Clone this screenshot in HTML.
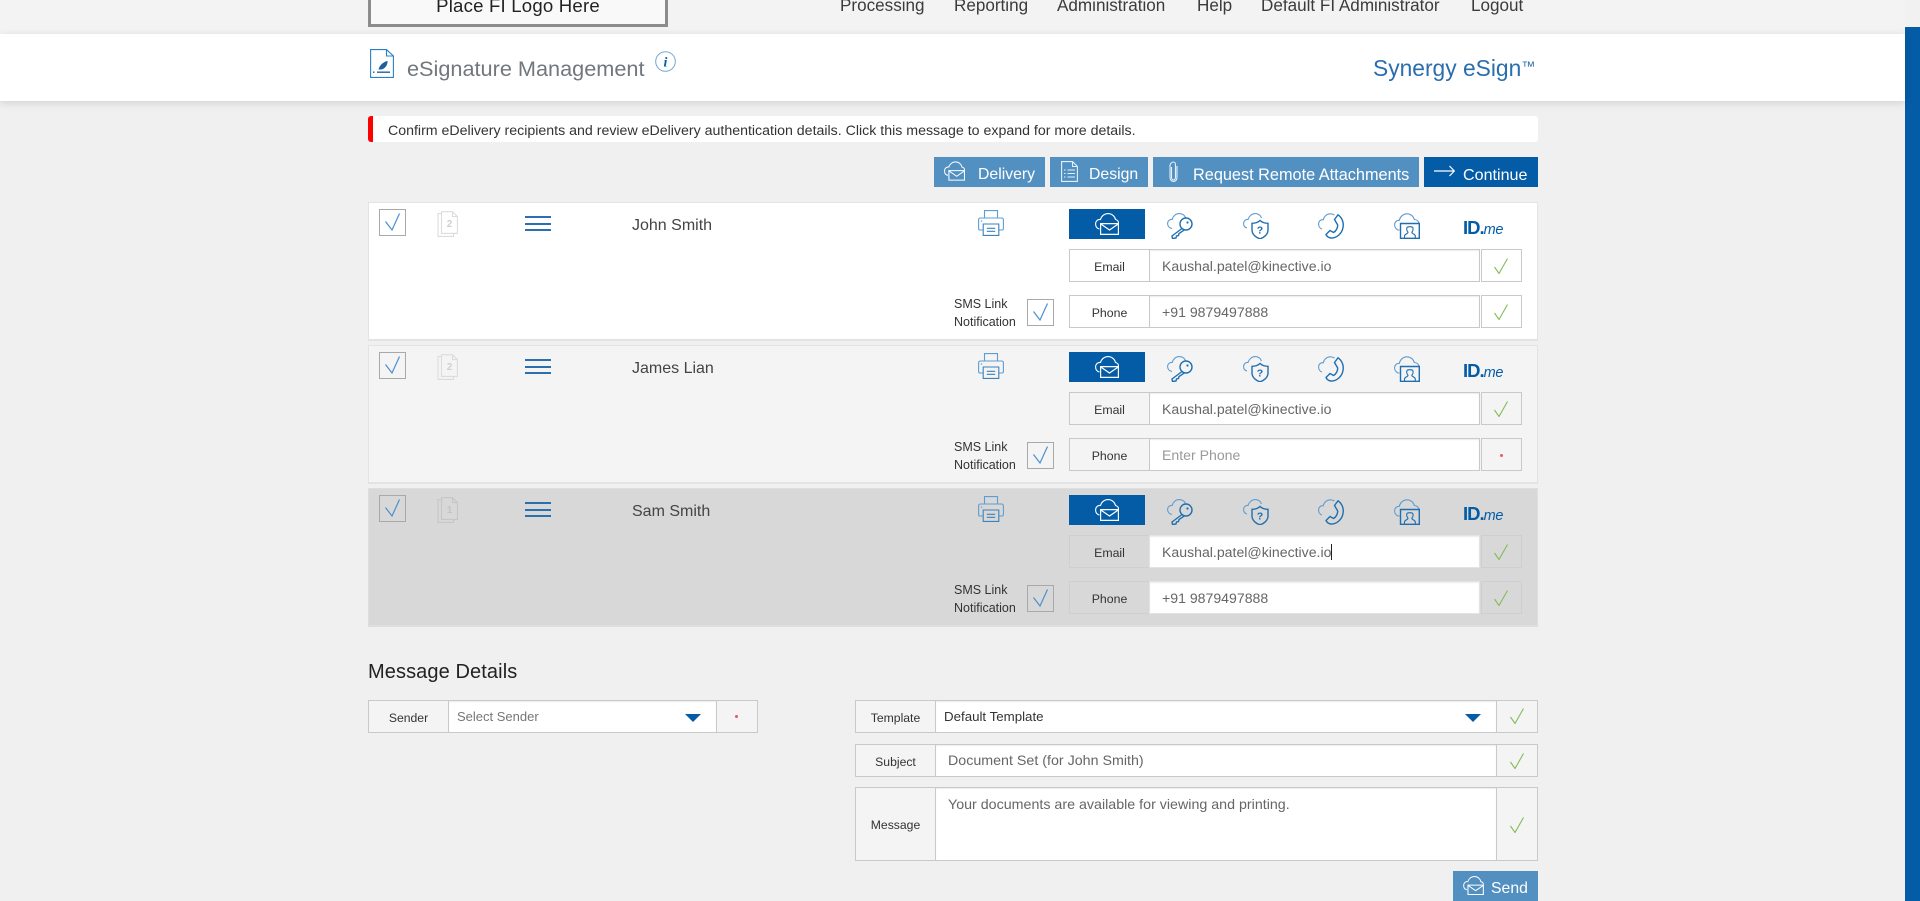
<!DOCTYPE html>
<html lang="en">
<head>
<meta charset="utf-8">
<title>eSignature Management</title>
<style>
*{box-sizing:border-box}
html,body{margin:0;padding:0;width:1920px;height:901px;overflow:hidden;background:#f0f0f0;font-family:"Liberation Sans",Arial,sans-serif;color:#333}
.a,.t,svg.i{position:absolute}
.t{white-space:nowrap;line-height:20px;height:20px}
#top{left:0;top:0;width:1905px;height:34px;background:#f3f3f3}
#logo{left:368px;top:-6px;width:300px;height:33px;background:#f9f9f9;border:3px solid #8c8c8c;text-align:center;font-size:18.6px;line-height:17px;color:#222;letter-spacing:.2px}
.nav{font-size:17.1px;color:#3b3b3b;top:-4px}
#bar{left:0;top:34px;width:1905px;height:67px;background:#fff;box-shadow:0 2px 8px rgba(0,0,0,.13)}
#sb{left:1905px;top:27px;width:15px;height:874px;background:#045ca6}
#sbt{left:1905px;top:0;width:15px;height:27px;background:#f1f1f1}
#msg{left:368px;top:116px;width:1170px;height:26px;background:#fff;border-left:5px solid #f00;border-radius:3px}
.btn{height:30px;top:157px;background:#5390c2}
.bt{color:#fff;font-size:15.8px;top:165px}
.row{left:368px;width:1170px;height:138px;background:#fff;box-shadow:inset 0 0 0 1px #e3e3e3,0 1px 0 #e3e3e3;color:#dcdcdc}
.row.r2{background:#f4f4f4}
.row.r3{background:#d8d8d8;box-shadow:inset 0 0 0 1px #dedede,0 1px 0 #dedede;color:#c6c6c6}
.cb{width:27px;height:27px;border:1px solid #a9a9a9}
.name{left:264px;top:14px;font-size:16px;color:#444}
.blk{left:701px;top:7px;width:76px;height:30px;background:#045ca6}
.h{height:2px;left:157px;width:26px;background:#2a70ae}
.sms{left:586px;font-size:12.5px;color:#333}
.f{height:33px;left:701px;width:453px}
.c{position:absolute;top:0;height:33px;border:1px solid #c9c9c9}
.lab{left:0;width:81px;text-align:center;font-size:12.3px;line-height:35px;color:#333}
.inp{left:80px;width:331px;background:#fff;box-shadow:inset 0 1px 1px rgba(0,0,0,.08);font-size:14.1px;line-height:33px;padding-left:12px;color:#666;white-space:nowrap}
.ok{left:412px;width:41px}
.r3 .c{border-color:#cfcfcf}
.r3 .inp{border-color:#e3e3e3}
.ph{color:#999}
.caret{display:inline-block;width:1px;height:16px;background:#222;vertical-align:-3px}
.dot{position:absolute;width:3px;height:3px;border-radius:50%;background:#e8566a}
.gc{position:absolute;width:14px;height:16px;fill:none;stroke:#86ba5a;stroke-width:1.1}
.m .c{height:33px;background:#f4f4f4}
.m .lab{font-size:12.2px;background:#f4f4f4}
.m .inp{background:#fff;line-height:31px}
.idme{color:#045ca6;font-weight:bold;font-size:18.5px;letter-spacing:-1px;top:16px}
.idme i{font-size:14.5px;font-weight:normal;letter-spacing:-.3px;font-family:"Liberation Sans",sans-serif}
.lt{fill:none;stroke:#5f9dd0;stroke-width:1.1}
.dk{fill:none;stroke:#1f6fb0;stroke-width:1.4}
</style>
</head>
<body>
<svg width="0" height="0" style="position:absolute">
<defs>
<symbol id="mail" viewBox="0 0 24 22"><path d="M4.5 16C2 15.5.6 13.5.6 11 .6 8 3 6 5.5 6.5 6.5 3 9.5.6 13 .6c4 0 7 2.9 7.5 5.9 2 .5 3 2 3 3.5" fill="none" stroke="currentColor" stroke-width="1.1"/><path d="M5.6 10.6H23.4V21.4H5.6ZM5.8 11 14.5 17 23.2 11" fill="none" stroke="currentColor" stroke-width="1.2"/></symbol>
<symbol id="key" viewBox="0 0 26 26"><path class="lt" d="M5 15.5C2.3 15 .6 13 .6 10.5.6 8 2.8 6 5.2 6.5 6 3 9 .6 12 .6c3 0 5.5 1.5 6.5 4"/><circle class="dk" cx="19" cy="11" r="6"/><circle cx="20.5" cy="9.5" r="1.1" fill="#1f6fb0"/><path class="dk" d="M15 15.5 5 23 5.5 25.5 9 25 9.5 23 11.5 22.5 12 20.5 17.5 16.8"/></symbol>
<symbol id="shield" viewBox="0 0 26 26"><path class="lt" d="M4 15C2 14.5.6 12.8.6 10.5.6 8 2.8 6 5 6.5 6 3 9 .6 12 .6c3 0 5.5 1.7 6.5 4.4"/><path class="dk" d="M17 7.5C19.5 9.8 22.5 10.3 25 10.3V17C25 21.5 21 24.5 17 25.8 13 24.5 9 21.5 9 17V10.3C11.5 10.3 14.5 9.8 17 7.5Z"/><text x="17" y="20.5" text-anchor="middle" font-family="Liberation Sans" font-weight="bold" font-size="10.5" fill="#1f6fb0">?</text></symbol>
<symbol id="phone" viewBox="0 0 26 26"><path class="lt" d="M4 16C2 15.5.6 13.5.6 11 .6 8.3 2.8 6.3 5.2 6.8 6 3.3 9 .8 12.2.8c1.5 0 3 .4 4.3 1.2"/><path class="dk" d="M16.5 6.5 20 1.8C24 4.5 26 9.5 25 14.5 24 20.5 18.5 25.4 13 25 10.8 24.8 9 23.5 8 21.5L12 17.5 15.5 19.500C18 18.200 19.800 15 19.700 12L16.500 6.500Z"/></symbol>
<symbol id="person" viewBox="0 0 26 26"><path class="lt" d="M5.5 17H4C2 16 .6 14 .6 12 .6 9 3 7 5.2 7.5 6 4 9 .8 13 .8c3.500 0 6.500 2.600 7.300 5.700 2.200.2 4 1.500 4.700 3.500"/><path class="dk" d="M6.5 10.5H25.3V25.3H6.5Z"/><path d="M10.5 25V23C10.5 21 14 20.8 14 19.2 12.8 18 12.5 16.8 12.8 15 13.2 13.3 18.6 13.3 19 15 19.3 16.8 19 18 17.8 19.2 17.8 20.8 21.3 21 21.3 23V25" fill="none" stroke="#1f6fb0" stroke-width="1.1"/></symbol>
<symbol id="printer" viewBox="0 0 26 26"><path class="lt" d="M6.5 8V.6H19.5V8"/><path d="M5 20H2C1 20 .6 19.4.6 18.5V10C.6 8.8 1.3 8 2.5 8H23.5C24.7 8 25.4 8.8 25.4 10V18.5C25.4 19.4 25 20 24 20H21" fill="none" stroke="#5f9dd0" stroke-width="1.1"/><circle cx="3.5" cy="11" r=".8" fill="#6fa6d3"/><path d="M5.2 14H20.8V25.4H5.2ZM8.8 18.3H17.2M8.8 21.3H17.2" fill="none" stroke="#3b81bc" stroke-width="1.1"/></symbol>
<symbol id="pages" viewBox="0 0 21 26"><path d="M4.5 2.5H1V25.4H16.5V22.5" fill="none" stroke="currentColor" stroke-width="1.1"/><path d="M4.5.7H15.5L20.4 5.6V22.4H4.5ZM15.5 1V5.6H20.2" fill="none" stroke="currentColor" stroke-width="1.1"/></symbol>
<symbol id="chk" viewBox="0 0 27 27"><path d="M6.5 12.5 13 21 20.5 4.5" fill="none" stroke="#4a90cf" stroke-width="1.2"/></symbol>
<symbol id="g" viewBox="0 0 14 16"><path d="M.5 9 5 15.5 13.5.5"/></symbol>
</defs>
</svg>

<div class="a" id="top"></div>
<div class="a" id="logo">Place FI Logo Here</div>
<div class="t nav" style="left:840px">Processing</div>
<div class="t nav" style="left:954px">Reporting</div>
<div class="t nav" style="left:1057px">Administration</div>
<div class="t nav" style="left:1197px">Help</div>
<div class="t nav" style="left:1261px">Default FI Administrator</div>
<div class="t nav" style="left:1471px">Logout</div>
<div class="a" id="sbt"></div><div class="a" id="sb"></div>

<div class="a" id="bar"></div>
<svg class="i" style="left:370px;top:49px" width="24" height="29" viewBox="0 0 24 29"><path d="M.6.6H16.5L23.4 7V28.4H.6ZM16.5 1V7H23" fill="none" stroke="#2a80c4" stroke-width="1.1"/><path d="M8.5 20.5C9.5 16 14 12.5 17.5 12 18 16 14.5 20.5 11 20.5ZM8.5 22 12 17.5" fill="#1f5f9e"/><path d="M3 23.2H4.5M7 23.2H20" stroke="#1f5f9e" stroke-width="1.3"/></svg>
<div class="t" style="left:407px;top:59px;font-size:21.7px;color:#72777d">eSignature Management</div>
<svg class="i" style="left:655px;top:51px" width="21" height="21" viewBox="0 0 21 21"><circle cx="10.5" cy="10.5" r="9.8" fill="none" stroke="#6fa6d3"/><text x="10.5" y="15.5" text-anchor="middle" font-family="Liberation Serif" font-style="italic" font-weight="bold" font-size="14" fill="#045ca6">i</text></svg>
<div class="t" style="left:1373px;top:58px;font-size:22.8px;color:#2a6eae">Synergy eSign<span style="font-size:14px;vertical-align:5px;line-height:0">™</span></div>

<div class="a" id="msg"></div>
<div class="t" style="left:388px;top:121px;font-size:14.18px;color:#333">Confirm eDelivery recipients and review eDelivery authentication details. Click this message to expand for more details.</div>

<div class="a btn" style="left:934px;width:111px"></div>
<svg class="i" style="left:944px;top:161px;color:#fff" width="21" height="20"><use href="#mail"/></svg>
<div class="t bt" style="left:978px">Delivery</div>
<div class="a btn" style="left:1050px;width:98px"></div>
<svg class="i" style="left:1061px;top:161px" width="17" height="21" viewBox="0 0 17 21"><path d="M.6.6H11.5L16.4 5.5V20.4H.6ZM11.5 1V5.5H16M3 9H4.5M6.5 9H14M3 12.5H4.5M6.5 12.5H14M3 16H4.5M6.5 16H14" fill="none" stroke="#e4f0f9" stroke-width="1.1"/></svg>
<div class="t bt" style="left:1089px">Design</div>
<div class="a btn" style="left:1153px;width:266px"></div>
<svg class="i" style="left:1169px;top:161px" width="9" height="21" viewBox="0 0 9 21"><path d="M2.5 6V16C2.5 18 3.5 19 4.5 19S6.5 18 6.5 16V4C6.5 2 5.5 1 4.5 1S1 2 1 5V16C1 19 2.5 20.4 4.5 20.4S8 19 8 16V5" fill="none" stroke="#e4f0f9" stroke-width="1.1"/></svg>
<div class="t bt" style="left:1193px;font-size:16.3px">Request Remote Attachments</div>
<div class="a btn" style="left:1424px;width:114px;background:#045ca6"></div>
<svg class="i" style="left:1434px;top:165px" width="21" height="12" viewBox="0 0 21 12"><path d="M0 6H20M15.5 1 20.3 6 15.5 11" fill="none" stroke="#fff" stroke-width="1.2"/></svg>
<div class="t bt" style="left:1463px;font-size:16.1px">Continue</div>

<!-- Row 1 -->
<div class="a row" style="top:202px">
  <div class="a cb" style="left:11px;top:7px"><svg width="25" height="25" viewBox="1 1 25 25"><use href="#chk" width="27" height="27"/></svg></div>
  <svg class="i" style="left:69px;top:9px" width="21" height="26"><use href="#pages"/><text x="12.5" y="16" text-anchor="middle" font-family="Liberation Sans" font-weight="bold" font-size="10" fill="#d0d0d0">2</text></svg>
  <div class="a h" style="top:14px"></div><div class="a h" style="top:21px"></div><div class="a h" style="top:27px"></div>
  <div class="t name">John Smith</div>
  <svg class="i" style="left:610px;top:8px" width="26" height="26"><use href="#printer"/></svg>
  <div class="a blk"></div>
  <svg class="i" style="left:727px;top:11px;color:#fff" width="24" height="22"><use href="#mail"/></svg>
  <svg class="i" style="left:799px;top:11px" width="26" height="26"><use href="#key"/></svg>
  <svg class="i" style="left:875px;top:11px" width="26" height="26"><use href="#shield"/></svg>
  <svg class="i" style="left:950px;top:11px" width="26" height="26"><use href="#phone"/></svg>
  <svg class="i" style="left:1026px;top:11px" width="26" height="26"><use href="#person"/></svg>
  <div class="t idme" style="left:1095px">ID.<i>me</i></div>
  <div class="a f" style="top:47px"><div class="c lab">Email</div><div class="c inp">Kaushal.patel@kinective.io</div><div class="c ok"><svg class="gc" style="left:12px;top:8px"><use href="#g"/></svg></div></div>
  <div class="t sms" style="top:92px">SMS Link</div><div class="t sms" style="top:110px">Notification</div>
  <div class="a cb" style="left:659px;top:97px"><svg width="25" height="25" viewBox="1 1 25 25"><use href="#chk" width="27" height="27"/></svg></div>
  <div class="a f" style="top:93px"><div class="c lab">Phone</div><div class="c inp">+91 9879497888</div><div class="c ok"><svg class="gc" style="left:12px;top:8px"><use href="#g"/></svg></div></div>
</div>

<!-- Row 2 -->
<div class="a row r2" style="top:345px">
  <div class="a cb" style="left:11px;top:7px"><svg width="25" height="25" viewBox="1 1 25 25"><use href="#chk" width="27" height="27"/></svg></div>
  <svg class="i" style="left:69px;top:9px" width="21" height="26"><use href="#pages"/><text x="12.5" y="16" text-anchor="middle" font-family="Liberation Sans" font-weight="bold" font-size="10" fill="#d0d0d0">2</text></svg>
  <div class="a h" style="top:14px"></div><div class="a h" style="top:21px"></div><div class="a h" style="top:27px"></div>
  <div class="t name">James Lian</div>
  <svg class="i" style="left:610px;top:8px" width="26" height="26"><use href="#printer"/></svg>
  <div class="a blk"></div>
  <svg class="i" style="left:727px;top:11px;color:#fff" width="24" height="22"><use href="#mail"/></svg>
  <svg class="i" style="left:799px;top:11px" width="26" height="26"><use href="#key"/></svg>
  <svg class="i" style="left:875px;top:11px" width="26" height="26"><use href="#shield"/></svg>
  <svg class="i" style="left:950px;top:11px" width="26" height="26"><use href="#phone"/></svg>
  <svg class="i" style="left:1026px;top:11px" width="26" height="26"><use href="#person"/></svg>
  <div class="t idme" style="left:1095px">ID.<i>me</i></div>
  <div class="a f" style="top:47px"><div class="c lab">Email</div><div class="c inp">Kaushal.patel@kinective.io</div><div class="c ok"><svg class="gc" style="left:12px;top:8px"><use href="#g"/></svg></div></div>
  <div class="t sms" style="top:92px">SMS Link</div><div class="t sms" style="top:110px">Notification</div>
  <div class="a cb" style="left:659px;top:97px"><svg width="25" height="25" viewBox="1 1 25 25"><use href="#chk" width="27" height="27"/></svg></div>
  <div class="a f" style="top:93px"><div class="c lab">Phone</div><div class="c inp ph">Enter Phone</div><div class="c ok"><span class="dot" style="left:18px;top:15px"></span></div></div>
</div>

<!-- Row 3 -->
<div class="a row r3" style="top:488px">
  <div class="a cb" style="left:11px;top:7px"><svg width="25" height="25" viewBox="1 1 25 25"><use href="#chk" width="27" height="27"/></svg></div>
  <svg class="i" style="left:69px;top:9px" width="21" height="26"><use href="#pages"/><text x="12.5" y="16" text-anchor="middle" font-family="Liberation Sans" font-weight="bold" font-size="10" fill="#c4c4c4">1</text></svg>
  <div class="a h" style="top:14px"></div><div class="a h" style="top:21px"></div><div class="a h" style="top:27px"></div>
  <div class="t name">Sam Smith</div>
  <svg class="i" style="left:610px;top:8px" width="26" height="26"><use href="#printer"/></svg>
  <div class="a blk"></div>
  <svg class="i" style="left:727px;top:11px;color:#fff" width="24" height="22"><use href="#mail"/></svg>
  <svg class="i" style="left:799px;top:11px" width="26" height="26"><use href="#key"/></svg>
  <svg class="i" style="left:875px;top:11px" width="26" height="26"><use href="#shield"/></svg>
  <svg class="i" style="left:950px;top:11px" width="26" height="26"><use href="#phone"/></svg>
  <svg class="i" style="left:1026px;top:11px" width="26" height="26"><use href="#person"/></svg>
  <div class="t idme" style="left:1095px">ID.<i>me</i></div>
  <div class="a f" style="top:47px"><div class="c lab">Email</div><div class="c inp">Kaushal.patel@kinective.io<span class="caret"></span></div><div class="c ok"><svg class="gc" style="left:12px;top:8px"><use href="#g"/></svg></div></div>
  <div class="t sms" style="top:92px">SMS Link</div><div class="t sms" style="top:110px">Notification</div>
  <div class="a cb" style="left:659px;top:97px"><svg width="25" height="25" viewBox="1 1 25 25"><use href="#chk" width="27" height="27"/></svg></div>
  <div class="a f" style="top:93px"><div class="c lab">Phone</div><div class="c inp">+91 9879497888</div><div class="c ok"><svg class="gc" style="left:12px;top:8px"><use href="#g"/></svg></div></div>
</div>

<!-- Message details -->
<div class="t" style="left:368px;top:662px;font-size:20px;letter-spacing:.1px;color:#222">Message Details</div>

<div class="a m" style="left:368px;top:700px;width:390px;height:33px">
  <div class="c lab" style="width:81px">Sender</div>
  <div class="c inp" style="left:80px;width:269px;font-size:13px;padding-left:8px;color:#777">Select Sender</div>
  <div class="c ok" style="left:348px;width:42px"><span class="dot" style="left:18px;top:14px"></span></div>
</div>
<svg class="i" style="left:685px;top:714px" width="16" height="8"><path d="M0 0H16L8 8Z" fill="#045ca6"/></svg>

<div class="a m" style="left:855px;top:700px;width:683px;height:33px">
  <div class="c lab" style="width:81px">Template</div>
  <div class="c inp" style="left:80px;width:562px;font-size:13.3px;padding-left:8px;color:#333">Default Template</div>
  <div class="c" style="left:641px;width:42px"><svg class="gc" style="left:13px;top:7px"><use href="#g"/></svg></div>
</div>
<svg class="i" style="left:1465px;top:714px" width="16" height="8"><path d="M0 0H16L8 8Z" fill="#045ca6"/></svg>

<div class="a m" style="left:855px;top:744px;width:683px;height:33px">
  <div class="c lab" style="width:81px">Subject</div>
  <div class="c inp" style="left:80px;width:562px;font-size:14.25px;padding-left:12px;line-height:33px;color:#666">Document Set (for John Smith)</div>
  <div class="c" style="left:641px;width:42px"><svg class="gc" style="left:13px;top:8px"><use href="#g"/></svg></div>
</div>

<div class="a m" style="left:855px;top:787px;width:683px;height:74px">
  <div class="c lab" style="width:81px;height:74px;line-height:74px">Message</div>
  <div class="c inp" style="left:80px;width:562px;height:74px;font-size:14.25px;padding-left:12px;line-height:34px;color:#666">Your documents are available for viewing and printing.</div>
  <div class="c" style="left:641px;width:42px;height:74px"><svg class="gc" style="left:13px;top:29px"><use href="#g"/></svg></div>
</div>

<div class="a" style="left:1453px;top:871px;width:85px;height:30px;background:#5390c2"></div>
<svg class="i" style="left:1463px;top:876px;color:#fff" width="21" height="19"><use href="#mail"/></svg>
<div class="t bt" style="left:1491px;top:879px">Send</div>
</body>
</html>
